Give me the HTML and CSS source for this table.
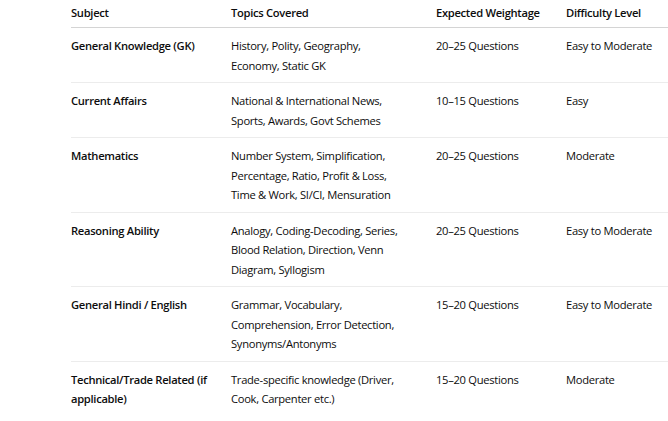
FILE: index.html
```html
<!DOCTYPE html>
<html lang="en">
<head>
<meta charset="utf-8">
<link rel="stylesheet" href="styles.css">
</head>
<body>
<table class="syllabus">
  <colgroup>
    <col class="c1"><col class="c2"><col class="c3"><col class="c4">
  </colgroup>
  <thead>
    <tr><th>Subject</th><th>Topics Covered</th><th>Expected Weightage</th><th>Difficulty Level</th></tr>
  </thead>
  <tbody>
    <tr><td class="subj">General Knowledge (GK)</td><td>History, Polity, Geography,<br>Economy, Static GK</td><td>20–25 Questions</td><td>Easy to Moderate</td></tr>
    <tr><td class="subj">Current Affairs</td><td>National &amp; International News,<br>Sports, Awards, Govt Schemes</td><td>10–15 Questions</td><td>Easy</td></tr>
    <tr><td class="subj">Mathematics</td><td>Number System, Simplification,<br>Percentage, Ratio, Profit &amp; Loss,<br>Time &amp; Work, SI/CI, Mensuration</td><td>20–25 Questions</td><td>Moderate</td></tr>
    <tr><td class="subj">Reasoning Ability</td><td>Analogy, Coding-Decoding, Series,<br>Blood Relation, Direction, Venn<br>Diagram, Syllogism</td><td>20–25 Questions</td><td>Easy to Moderate</td></tr>
    <tr><td class="subj">General Hindi / English</td><td>Grammar, Vocabulary,<br>Comprehension, Error Detection,<br>Synonyms/Antonyms</td><td>15–20 Questions</td><td>Easy to Moderate</td></tr>
    <tr class="last"><td class="subj">Technical/Trade Related (if<br>applicable)</td><td>Trade-specific knowledge (Driver,<br>Cook, Carpenter etc.)</td><td>15–20 Questions</td><td>Moderate</td></tr>
  </tbody>
</table>
</body>
</html>
```

FILE: styles.css
```css
html, body {
  margin: 0;
  padding: 0;
  background: #ffffff;
}
body {
  font-family: "Open Sans", "Noto Sans", sans-serif;
  font-size: 11.2px;
  letter-spacing: -0.3px;
  color: #0d0d0d;
  overflow: hidden;
}
.syllabus {
  border-collapse: collapse;
  table-layout: fixed;
  width: 610px;
  margin-left: 71px;
}
.c1 { width: 160px; }
.c2 { width: 205px; }
.c3 { width: 130px; }
.c4 { width: 115px; }
.syllabus th,
.syllabus td {
  text-align: left;
  vertical-align: top;
  padding: 8px 12px 7px 0;
  line-height: 19.5px;
  white-space: nowrap;
}
.syllabus th {
  font-weight: 600;
  padding-top: 3px;
  padding-bottom: 4.5px;
  border-bottom: 1px solid #d4d4d4;
}
.syllabus td {
  font-weight: 400;
  border-bottom: 1px solid #ececec;
}
.syllabus td.subj {
  font-weight: 600;
}
.syllabus tr.last td {
  border-bottom: none;
}
```
